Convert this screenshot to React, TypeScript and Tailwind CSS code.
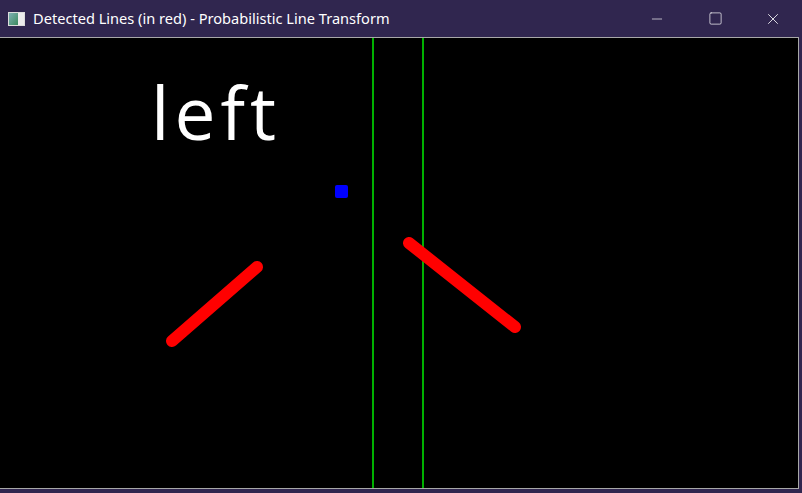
import { Minus, Square, X } from 'lucide-react';

export default function App() {
  return (
    <div className="w-[802px] h-[493px] bg-[#30264f] flex flex-col overflow-hidden" style={{ fontFamily: '"Noto Sans", sans-serif' }}>
      {/* Title bar */}
      <div className="h-[37px] flex items-center shrink-0">
        <div className="ml-[8px] w-[17px] h-[14px] border border-[#dcdcdc] flex overflow-hidden">
          <div className="w-[9px] h-full bg-gradient-to-br from-[#7fb0b5] to-[#3a8a5e]" />
          <div className="flex-1 bg-[#ececec]" />
        </div>
        <span className="ml-[8px] text-[14.6px] text-white">Detected Lines (in red) - Probabilistic Line Transform</span>
        <div className="ml-auto flex h-full">
          <button className="w-[58px] h-full flex items-center justify-center text-white">
            <Minus className="w-[16px] h-[16px]" strokeWidth={1} />
          </button>
          <button className="w-[58px] h-full flex items-center justify-center text-white">
            <Square className="w-[15px] h-[15px]" strokeWidth={1.1} absoluteStrokeWidth />
          </button>
          <button className="w-[58px] h-full flex items-center justify-center text-white">
            <X className="w-[18px] h-[18px]" strokeWidth={1.1} absoluteStrokeWidth />
          </button>
        </div>
      </div>

      {/* Image area */}
      <div className="flex-1 flex">
        <div className="w-[799px] h-[452px] border-t border-r border-b border-[#a8a8a8] bg-black relative shrink-0">
          <svg className="absolute inset-0" width="798" height="450" viewBox="0 38 798 450">
            <line x1="373" y1="38" x2="373" y2="488" stroke="#00b000" strokeWidth="2" />
            <line x1="423" y1="38" x2="423" y2="488" stroke="#00b000" strokeWidth="2" />
            <rect x="335" y="185" width="13" height="13" rx="2" fill="#0000ff" />
            <line x1="172" y1="341" x2="257" y2="267" stroke="#ff0000" strokeWidth="12" strokeLinecap="round" />
            <line x1="409" y1="243" x2="515" y2="327" stroke="#ff0000" strokeWidth="12" strokeLinecap="round" />
          </svg>
          <div
            className="absolute left-[151px] top-[37px] text-white text-[73px] leading-none tracking-[5px]"
            style={{ fontFamily: '"Open Sans", sans-serif', fontWeight: 400 }}
          >
            left
          </div>
        </div>
      </div>
    </div>
  );
}
